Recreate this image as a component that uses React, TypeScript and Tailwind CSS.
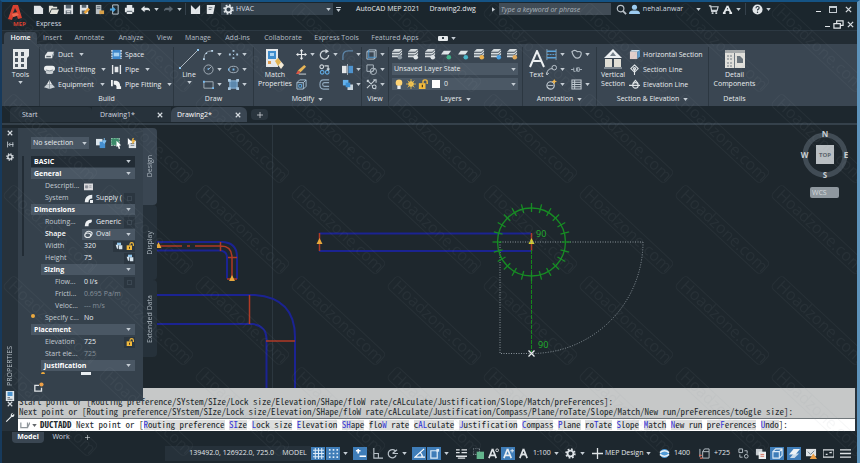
import type { ReactNode } from "react";
import clsx from "clsx";

const glyphs: Record<string, ReactNode> = {
  newFile: <path d="M1 2h7l3 3v6H1z" fill="#dfe3e6" />,
  open: <path d="M1 10V2h4l1 1h4v2H4zM4 6h8l-2 5H2z" fill="#e3e3dc" />,
  save: (
    <g>
      <path d="M1 1h10v10H1z" fill="#dfe3e6" />
      <path d="M3 1h6v4H3zM3 7h6v4H3z" fill="#53606b" />
      <path d="M4 8h4M4 10h4" stroke="#fff" />
    </g>
  ),
  saveAs: (
    <g>
      <path d="M1 1h9v10H1z" fill="#dfe3e6" />
      <path d="M3 1h5v3H3zM3 7h4v4H3z" fill="#53606b" />
      <path d="M5 9l5-5 2 2-5 5z" fill="#e8a33c" />
    </g>
  ),
  openWeb: (
    <g>
      <path d="M2 1h6v10H2z" fill="#b9c0c4" />
      <path d="M3 3h4M3 5h4" stroke="#59656e" />
      <path d="M6 7h5v4H6z" fill="#d9a047" />
    </g>
  ),
  saveWeb: (
    <g>
      <path d="M4 1h6v10H4z" fill="none" stroke="#c7d4dd" />
      <path d="M1 6h5M4 4l2 2-2 2" stroke="#4aa3dd" strokeWidth="2" fill="none" />
    </g>
  ),
  print: (
    <g>
      <path d="M3 1h6v3H3zM1 4h10v5H1zM3 9h6v2H3z" fill="#e2e6e9" />
      <path d="M3 8h6" stroke="#4b5862" />
    </g>
  ),
  undo: <path d="M5 2v2h3q3 0 3 4-2-2-6-1v2L1 5.500z" fill="#e2e6e9" />,
  redo: <path d="M7 2v2H4Q1 4 1 8q2-2 6-1v2l4-3.500z" fill="#58646e" />,
  mail: <path d="M1 1l5 5 5-5v10H1z" fill="#e2e6e9" />,
  sheet: (
    <g>
      <path d="M2 1h9L9 11H2z" fill="#e2e6e9" />
      <path d="M4 4h4M4 6h3" stroke="#68747e" />
    </g>
  ),
  gear: (
    <g fill="none" stroke="#dfe4e8">
      <circle cx="6" cy="6" r="3.200" strokeWidth="2" />
      <circle cx="6" cy="6" r="4.800" strokeWidth="1.800" strokeDasharray="1.900 1.870" />
    </g>
  ),
  search: (
    <g fill="none" stroke="#b9c1c8" strokeWidth="1.300">
      <circle cx="5" cy="5" r="3.600" />
      <path d="M7.500 7.500L11 11" strokeWidth="2" />
    </g>
  ),
  user: (
    <g fill="#9ccbf0">
      <circle cx="6" cy="3.500" r="2.800" />
      <path d="M0 11q0-4 4-4h4q4 0 4 4z" />
    </g>
  ),
  cart: (
    <g>
      <path d="M1 2h2l1 6h6M3 3h8l-1 4H4z" fill="none" stroke="#c9cfd4" strokeWidth="1.300" />
      <path d="M4 9h2v2H4zM8 9h2v2H8z" fill="#c9cfd4" />
    </g>
  ),
  apps: (
    <g fill="none" stroke="#e5e9ec" strokeWidth="1.800">
      <path d="M6 2L2 10M6 2l4 8M3 8q3-3 6 0" />
      <path d="M1 10h3M8 10h3" />
    </g>
  ),
  help: (
    <g>
      <circle cx="6" cy="6" r="5.500" fill="#e2e6e9" />
      <path d="M4.300 4.500q0-1.800 1.800-1.800t1.700 1.600q0 1-1.700 1.900v1" fill="none" stroke="#26313a" strokeWidth="1.200" />
      <circle cx="6" cy="9" r=".8" fill="#26313a" />
    </g>
  ),
  duct: (
    <g>
      <path d="M1 7l3-4h7L9 7zM1 7h8v3H1z" fill="#e4e7e9" />
      <path d="M9 10l2-4V3L9 7z" fill="#9ba6ae" />
      <path d="M2.500 7.500h5V9h-5z" fill="#59646e" />
    </g>
  ),
  fitting: (
    <g>
      <rect x="0" y="2" width="12" height="6" rx="3" fill="#eceeef" />
      <path d="M2 7v3q4 2 8 0V7z" fill="#c8ced2" />
      <path d="M2 6.500q4 2 8 0" fill="none" stroke="#7d8890" />
    </g>
  ),
  equipment: (
    <g>
      <path d="M6 1l3 5H3z" fill="#eceeef" />
      <path d="M3 6h6l3 3-6 2-6-2z" fill="#c9d0d5" />
      <path d="M6 1v10" stroke="#8e99a2" />
    </g>
  ),
  space: (
    <g>
      <path d="M1 1h10v10H1z" fill="#3d87cb" />
      <path d="M1 1v10M11 1v10" stroke="#d9e2e9" strokeWidth="1.500" strokeDasharray="2 1" />
      <path d="M3 4h6v4H3z" fill="#a6d2f2" />
    </g>
  ),
  pipe: <path d="M1 1h1.500v10H1zM9.500 1H11v10H9.500zM4 3h4v6H4z" fill="#e4e7e9" />,
  pipeFitting: (
    <path d="M0 1h2v7H0zM3 2h3q4 1 4 6h1v3H6V8Q6 6 3 6zM7 9h3" fill="#f0f2f3" />
  ),
  arc: (
    <g>
      <path d="M1 11Q1 2 10 2" fill="none" stroke="#9fabb6" />
      <path d="M0 10h2v2H0zM3 4h1.500v1.500H3zM9 1h2v2H9z" fill="#bcd8ee" />
    </g>
  ),
  circle: (
    <g fill="none" stroke="#a8b3bd">
      <circle cx="6" cy="6" r="5" />
      <path d="M6 6l3-3" />
      <path d="M5 5.500h1.500" stroke="#76baf0" strokeWidth="1.500" />
    </g>
  ),
  rect: (
    <g>
      <path d="M1 3h10v7H1z" fill="none" stroke="#a8b3bd" />
      <path d="M0 2h2v2H0zM10 9h2v2h-2z" fill="#76baf0" />
    </g>
  ),
  points: <path d="M5 1h2v2H5zM1 5h2v2H1zM9 5h2v2H9zM5 9h2v2H5zM5.500 5.500h1v1h-1z" fill="#a9c7df" />,
  ellipse: (
    <g>
      <ellipse cx="6" cy="6" rx="5" ry="3.500" fill="none" stroke="#a8b3bd" />
      <path d="M5 5h2v2H5zM0 5h1.500v2H0z" fill="#76baf0" />
    </g>
  ),
  region: (
    <g>
      <path d="M2 2h8v8H2z" fill="#5c88ad" stroke="#8ebbe0" />
      <path d="M0 0h3v3H0zM9 0h3v3H9zM0 9h3v3H0zM9 9h3v3H9z" fill="#a9c7df" />
    </g>
  ),
  move: (
    <g>
      <path d="M6 1v10M1 6h10" stroke="#e7eaec" strokeWidth="1.300" />
      <path d="M6 0l2 2.500H4zM6 12l2-2.500H4zM0 6l2.500-2v4zM12 6L9.500 4v4z" fill="#e7eaec" />
    </g>
  ),
  rotate: (
    <g>
      <path d="M8 2.500a4.500 4.500 0 1 0 2.500 4" fill="none" stroke="#cfd6db" strokeWidth="1.400" />
      <path d="M7 0l4 2.500L7 5z" fill="#cfd6db" />
    </g>
  ),
  fillet: <path d="M1 12V8q0-6 6-6h5" fill="none" stroke="#5e87ab" strokeWidth="1.400" />,
  pencil: (
    <g>
      <path d="M2 7l7-6 2 2-6 6z" fill="#e6b557" />
      <path d="M2 7l3 2-2 2H0z" fill="#d85443" />
      <path d="M3 11h8" stroke="#d8dde0" />
    </g>
  ),
  copy: (
    <g fill="none" strokeWidth="1.200">
      <circle cx="3" cy="3" r="2" stroke="#ccd3d8" />
      <circle cx="3.500" cy="9" r="2" stroke="#5fa8df" />
      <circle cx="9" cy="9" r="2" stroke="#5fa8df" />
      <path d="M6 2h4v4M8.500 5L10 6.500 11.500 5" stroke="#ccd3d8" />
    </g>
  ),
  mirror: (
    <g>
      <path d="M0 2h5v8H0z" fill="#e4e7e9" />
      <path d="M7 2h5v8H7z" fill="#4d93cf" />
      <path d="M6 0v12" stroke="#a8b3bd" />
    </g>
  ),
  box: (
    <g fill="none" stroke="#a9c3d8">
      <path d="M1 4h7v7H1zM1 4l3-3h7v7l-3 3M8 4l3-3" />
      <path d="M3 6h3v3H3z" stroke="#5fa8df" />
    </g>
  ),
  offset: (
    <path d="M11 1H5Q1 1 1 6t4 5h6M11 4H6Q4 4 4 6t2 2h5" fill="none" stroke="#90a9be" strokeWidth="1.200" />
  ),
  order: (
    <g>
      <path d="M1 1h6v6H1z" fill="#64b0ea" />
      <path d="M6 6h6v6H6z" fill="#c8d4dc" />
      <path d="M4 4h5v5H4z" fill="#3c8fd2" />
    </g>
  ),
  cube: (
    <g fill="none" stroke="#b7c6d2">
      <path d="M3 1h8v8l-2 2H1V3zM1 3h8v8M9 3l2-2" />
      <path d="M3 1v8h8M3 9l-2 2" stroke="#509bd5" />
    </g>
  ),
  shapes: (
    <g fill="none" stroke="#b2bdc6">
      <path d="M1 1h7v7H1z" />
      <circle cx="8" cy="8" r="3.500" />
      <path d="M5 10l5-5" />
    </g>
  ),
  select: (
    <g fill="none" stroke="#c3ccd3" strokeWidth="1.200">
      <path d="M1 1l10 10M10 1L1 10M1 3l2-2M8 1h3v3" />
      <circle cx="9" cy="8.500" r="2" fill="#35424f" />
    </g>
  ),
  bulb: (
    <g>
      <circle cx="6" cy="4.500" r="4" fill="#ffd474" />
      <path d="M4 8h4v4H4z" fill="#e9edef" />
    </g>
  ),
  sun: (
    <g>
      <circle cx="6" cy="6" r="3.300" fill="#f8cc5b" />
      <path d="M6 0v12M0 6h12M2 2l8 8M10 2l-8 8" stroke="#e8b94a" />
    </g>
  ),
  lock: (
    <g>
      <path d="M1 5h8v7H1z" fill="#f3ba3d" />
      <path d="M6 5V3q0-2 2.500-2T11 3v3" fill="none" stroke="#f3ba3d" strokeWidth="1.700" />
      <path d="M4.500 7h1.500v3H4.500z" fill="#4a3c1e" />
    </g>
  ),
  dim: (
    <g fill="none" stroke="#5aa4dc">
      <path d="M1 0v12M11 0v12" stroke="#8aa3b7" />
      <path d="M1 2.500h10M1 9.500h10" strokeWidth="1.500" />
      <path d="M1 6h10" strokeDasharray="2 1" />
    </g>
  ),
  leader: (
    <g fill="none" stroke="#c3ccd3">
      <path d="M1 11q0-6 6-6" />
      <circle cx="9" cy="4" r="2.500" />
      <path d="M0 9l1 3 2-2" />
    </g>
  ),
  note: (
    <g>
      <circle cx="5" cy="7" r="4" fill="none" stroke="#c3ccd3" strokeWidth="1.300" />
      <path d="M2 7h6" stroke="#c3ccd3" />
      <path d="M9 0l1 2 2 .5-2 1L9 6 8 3.500 6 3l2-1z" fill="#f5b94a" />
    </g>
  ),
  cloud: <path d="M1 3q3-3 6 0 5-1 4 3-1 4-4 4Q3 10 1 3z" fill="none" stroke="#b7c1c9" strokeWidth="1.200" />,
  tag: <path d="M0 6h3M9 6h3M3 4v4h2M6 4v4M8 4H7v4h2V4z" fill="none" stroke="#a9b4bd" />,
  table: (
    <path d="M1 1h10v10H1zM1 3.500h10M1 6h10M1 8.500h10M4 1v10" fill="none" stroke="#c3ccd3" strokeWidth="1.100" />
  ),
  hsection: (
    <g>
      <path d="M1 3l2-2h9l-2 2z" fill="#cfe0ec" />
      <path d="M1 3h8v8H1z" fill="#e3cfcb" />
      <path d="M9 3l3-2v7l-3 3z" fill="#5e9bcb" />
    </g>
  ),
  sectionLine: (
    <g fill="none" stroke="#dfe4e7" strokeWidth="1.200">
      <path d="M6 1l4 4-4 4-4-4zM6 5v7" />
      <circle cx="6" cy="5" r="1.200" />
    </g>
  ),
  elevLine: (
    <g fill="none" stroke="#dfe4e7" strokeWidth="1.200">
      <circle cx="7" cy="7" r="3" />
      <path d="M0 7h12M4 5l3-3.500L10 5" />
    </g>
  ),
  swap: (
    <g>
      <path d="M0 1h7v7H0z" fill="#dbe4ea" />
      <path d="M4 4h6v7H4z" fill="#458fd0" />
      <path d="M9 0v5M7 3l2 3 2-3z" stroke="#7fbef0" fill="#7fbef0" />
    </g>
  ),
  pickGreen: (
    <g>
      <path d="M0 0h9v8H0z" fill="#3c8b6a" stroke="#bcd6c9" strokeDasharray="2 1" />
      <path d="M6 3l5 5-2 .4 1 3-1.500.5-1-3-1.500 1z" fill="#fff" />
    </g>
  ),
  quick: (
    <g>
      <path d="M3 3h8v8H3z" fill="#dfe3e6" />
      <path d="M5 6h4M5 8h4" stroke="#6b7781" />
      <path d="M2 0l5 5-3 .3L2 8z" fill="#fff" />
      <path d="M8 0l-1 3h2L7 6" fill="none" stroke="#eab03e" strokeWidth="1.500" />
    </g>
  ),
  desc: (
    <g>
      <path d="M0 2h12v9H0z" fill="#d9d9dc" />
      <path d="M2 5h3v3H2zM7 5h3M7 7h3" fill="#8b8f98" stroke="#8b8f98" />
    </g>
  ),
  elbow: <path d="M1 11Q1 1 11 1v5Q6 6 6 11zM8 8h4v4H8z" fill="#eceff1" />,
  generic: <path d="M1 11Q1 2 10 2q2 4-3 5-1 0-1 4z" fill="#eceff1" />,
  oval: (
    <g fill="none" stroke="#e5e9eb" strokeWidth="1.500">
      <ellipse cx="5" cy="7" rx="4" ry="3" />
      <path d="M2 4q3-4 8-1 2 2-1 5" />
    </g>
  ),
  page: (
    <g>
      <path d="M3 1h6v4H3z" fill="#8ec3ea" />
      <path d="M6 5h5v6H6zM1 4h4v6H3z" fill="#d6e3ec" />
    </g>
  ),
  manager: (
    <g>
      <path d="M1 0h10v12H1z" fill="#dfe6eb" />
      <path d="M3 1h6v5H3z" fill="#4a93cf" />
      <path d="M3 8h3M3 10h6" stroke="#53606b" />
    </g>
  ),
  addSet: (
    <g>
      <path d="M6 4H1v7h8V7" fill="none" stroke="#dfe3e6" strokeWidth="1.600" />
      <circle cx="9" cy="3" r="2.500" fill="#eda047" />
    </g>
  ),
  grid: <path d="M0 2.500h12M0 6h12M0 9.500h12M2.500 0v12M6 0v12M9.500 0v12" stroke="#dcebf8" strokeWidth="1.100" />,
  dots: (
    <path d="M1 2h10M1 6h10M1 10h10" stroke="#dcebf8" strokeWidth="1.800" strokeDasharray="1.800 2.300" />
  ),
  infer: <path d="M1 3h5M3.500 1v5M5 9h7" stroke="#fff" strokeWidth="1.800" fill="none" />,
  ortho: <path d="M2 0v11h10M2 6h5v5" stroke="#bac3ca" strokeWidth="1.200" fill="none" />,
  polar: (
    <g fill="none" stroke="#bac3ca" strokeWidth="1.300">
      <path d="M10 8a4.500 4.500 0 1 1-1-5M6 6l5-4M6 6h6" />
    </g>
  ),
  track: <path d="M11 1L1 10h11M7 5q2 2 2 5" stroke="#fff" strokeWidth="1.300" fill="none" />,
  osnap: (
    <g>
      <path d="M2 3h7v8H2z" fill="none" stroke="#dcebf8" strokeWidth="1.300" />
      <path d="M8 1h3v3H8z" fill="#dcebf8" />
    </g>
  ),
  weights: <path d="M0 2h4M6 2h6M0 5h4M6 5h6M0 9h12M2 11h8" stroke="#dfe3e6" strokeWidth="1.400" />,
  cycle: (
    <g>
      <path d="M0 0h7v7H0z" fill="none" stroke="#aab4bc" strokeDasharray="1 1" />
      <path d="M4 4h8v8H4z" fill="#62b48c" />
    </g>
  ),
  annoVis: (
    <g fill="none" stroke="#dfe3e6">
      <path d="M5 1L1 11M5 1l4 10M2 8h6" strokeWidth="1.800" />
      <circle cx="10" cy="2.500" r="1.500" />
    </g>
  ),
  anno: <path d="M6 1L2 11M6 1l4 10M3 8q3-2 6 0" stroke="#dfe3e6" strokeWidth="1.800" fill="none" />,
  annoSpark: (
    <g>
      <path d="M5 1L1 11M5 1l4 10M2 8h6" stroke="#e8eef2" strokeWidth="1.800" fill="none" />
      <path d="M10 1v4M8 3h4" stroke="#e8eef2" />
    </g>
  ),
  plus: <path d="M6 0v12M0 6h12" stroke="#dfe3e6" strokeWidth="1.400" />,
  sphere: (
    <g>
      <circle cx="6" cy="6" r="5" fill="#4f9ad8" />
      <path d="M1 5q5-4 10 0M1 7q5 4 10 0" stroke="#eef3f6" strokeWidth="1.700" fill="none" />
    </g>
  ),
  elevCube: (
    <g fill="none" stroke="#bdc6cd">
      <path d="M4 4h7v7H4zM4 4l2-3h5v3M1 1v9" />
      <path d="M0 8h3M1 11h3" stroke="#d56a57" strokeWidth="1.500" />
    </g>
  ),
  link: (
    <g fill="none" stroke="#bdc6cd">
      <path d="M1 1h4v4H1zM7 3h3v3" />
      <circle cx="9" cy="9" r="2" />
      <path d="M2 7v3h3" />
    </g>
  ),
  pages: (
    <g>
      <path d="M1 1h7v7H1z" fill="#c8ced2" />
      <path d="M4 4h8v8H4z" fill="#eceff0" />
      <path d="M6 7h4M6 9h4" stroke="#d56a57" />
    </g>
  ),
  isoBox: (
    <g fill="none" stroke="#dcebf8" strokeWidth="1.200">
      <path d="M1 4h7v7H1zM1 4l3-3h7v7l-3 3M8 4l3-3" />
    </g>
  ),
  gfx: (
    <g fill="#eef3f6">
      <path d="M5 1h7L7 7H0z" />
      <path d="M5 6h6l-5 5H1z" opacity=".8" />
    </g>
  ),
  warn: (
    <g>
      <path d="M0 1h11v8H0z" fill="#dfe3e6" />
      <path d="M2 4l3 3 4-4" stroke="#6b7781" fill="none" />
      <path d="M8 6l4 6H4z" fill="#eda047" />
    </g>
  ),
  clean: (
    <g fill="none" stroke="#dfe3e6" strokeWidth="1.200">
      <path d="M0 2h12v8H0zM3 7h2M7 5h2V4" />
    </g>
  ),
  burger: <path d="M0 2h12M0 6h12M0 10h12" stroke="#dfe3e6" strokeWidth="1.500" />,
  pin: <path d="M1 1v10M4 6h7M10 2v8M6 3L3 6l3 3" stroke="#cdd5db" strokeWidth="1.400" fill="none" />,
  wrench: <path d="M1 11l6-6q-1-3 3-4L8 3l1 1 2-2q1 4-3 4l-6 6z" fill="#e9edef" />,
  restore: <path d="M1 5h7v5H1zM4 5V2h7v5H8" stroke="#e2e6e9" strokeWidth="1.300" fill="none" />,
  prompt: <path d="M1 3v6h8V3M9 9l3-6" stroke="#8f969b" strokeWidth="1.500" fill="none" />,
};

const layerMarks = ["#8a96a0", "#e1e6e9", "#e1e6e9", "#3fb489", "#48b6c9", "#edb04c", "#4a9ddd", "#e0a95c"];

const Icon = ({ name, className = "size-[11px]" }: { name: string; className?: string }) => (
  <svg viewBox="0 0 12 12" className={clsx("shrink-0", className)} aria-hidden="true">
    {glyphs[name]}
  </svg>
);

const Caret = ({ className = "" }: { className?: string }) => (
  <svg viewBox="0 0 6 4" className={clsx("h-[3px] w-[5px] shrink-0", className)} aria-hidden="true">
    <path d="M0 0h6L3 4z" fill="#c5cdd4" />
  </svg>
);

const Close = ({ className = "size-[7px]" }: { className?: string }) => (
  <svg viewBox="0 0 8 8" className={clsx("shrink-0", className)} aria-hidden="true">
    <path d="M1 1l6 6M7 1L1 7" stroke="#d5dbe0" strokeWidth="1.500" />
  </svg>
);

const IconButton = ({ name, label, className = "w-[15px]" }: { name: string; label: string; className?: string }) => (
  <button aria-label={label} className={clsx("flex shrink-0 items-center justify-center", className)}>
    <Icon name={name} />
  </button>
);

const TitleBar = () => (
  <header className="flex h-[29px] border-b border-[#2c3842] bg-[#1b262d]">
    <svg viewBox="0 0 20 24" className="ml-[5px] mt-[1px] h-6 w-5 shrink-0" aria-hidden="true">
      <path d="M1 16L6 2h5l4 13-4 1-1-3-4 1-1 3z" fill="#d9402f" />
      <path d="M6 10l2-5 2 4z" fill="#1b262d" />
      <path d="M5 11l5-1 2 2-6 2z" fill="#ef6a50" />
      <text x="6" y="23" className="fill-[#d9402f] text-[6px] font-bold">
        MEP
      </text>
    </svg>
    <div className="flex min-w-0 flex-1 flex-col">
      <div className="flex h-[15px] items-center">
        <div className="ml-1 flex items-center">
          <IconButton name="newFile" label="New" />
          <IconButton name="open" label="Open" />
          <IconButton name="save" label="Save" />
          <IconButton name="saveAs" label="Save as" className="w-4" />
          <IconButton name="openWeb" label="Open from web" />
          <IconButton name="saveWeb" label="Save to web" />
          <IconButton name="print" label="Plot" />
          <IconButton name="undo" label="Undo" className="w-4" />
          <Caret className="mx-px" />
          <IconButton name="redo" label="Redo" className="w-4" />
          <Caret className="mx-px" />
          <span className="mx-[2px] h-3 w-px bg-[#35414b]" />
          <IconButton name="mail" label="Share" />
          <IconButton name="sheet" label="Sheet set" />
        </div>
        <button className="ml-[3px] flex h-[12px] w-28 items-center gap-[2px] bg-[#36434e] px-[2px]">
          <Icon name="gear" />
          HVAC
          <Caret className="ml-auto" />
        </button>
        <button aria-label="Customize" className="ml-[3px] border-t border-[#c5cdd4] pt-px">
          <Caret />
        </button>
        <h1 className="ml-[15px] flex shrink-0 gap-[10px] whitespace-nowrap text-[#e6eaed]">
          <span>AutoCAD MEP 2021</span>
          <span>Drawing2.dwg</span>
        </h1>
        <Caret className="ml-[15px] -rotate-90" />
        <input
          aria-label="Search help"
          placeholder="Type a keyword or phrase"
          className="ml-[3px] h-[12px] w-28 min-w-0 bg-[#414c56] px-[2px] italic placeholder:text-[#a9b2ba]"
        />
        <div className="ml-[3px] flex items-center">
          <IconButton name="search" label="Search" />
          <button className="flex items-center gap-[3px]">
            <Icon name="user" />
            nehal.anwar
            <Caret className="ml-[10px]" />
          </button>
          <IconButton name="cart" label="Store" className="ml-[5px] w-[14px]" />
          <IconButton name="apps" label="App store" />
          <Caret className="ml-px" />
          <span className="mx-[4px] h-3 w-px bg-[#35414b]" />
          <IconButton name="help" label="Help" />
          <Caret className="ml-px" />
        </div>
        <div className="ml-auto mr-[5px] flex items-center gap-2">
          <button aria-label="Minimize" className="mt-[5px] h-px w-[5px] bg-[#e2e6e9]" />
          <button aria-label="Maximize" className="h-[7px] w-2 border border-t-2 border-[#c6cdd3]" />
          <button aria-label="Close">
            <Close />
          </button>
        </div>
      </div>
      <div className="flex h-[14px] items-center pt-[2px]">
        <button className="ml-[9px]">Express</button>
        <div className="ml-auto mr-[3px] flex items-center gap-1">
          <button aria-label="Minimize drawing" className="mt-[5px] h-px w-[5px] bg-[#e2e6e9]" />
          <IconButton name="restore" label="Restore drawing" className="w-[9px]" />
          <button aria-label="Close drawing">
            <Close />
          </button>
        </div>
      </div>
    </div>
  </header>
);

const ribbonTabs = [
  { title: "Home", width: "w-[33px]" },
  { title: "Insert", width: "w-[31px]" },
  { title: "Annotate", width: "w-[43px]" },
  { title: "Analyze", width: "w-[40px]" },
  { title: "View", width: "w-[27px]" },
  { title: "Manage", width: "w-[40px]" },
  { title: "Add-ins", width: "w-[39px]" },
  { title: "Collaborate", width: "w-[52px]" },
  { title: "Express Tools", width: "w-[55px]" },
  { title: "Featured Apps", width: "w-[62px]" },
];

const RibbonTabs = () => (
  <nav className="flex h-[13px] items-end bg-[#222c34] pl-[2px]">
    {ribbonTabs.map((tab, i) => (
      <button
        key={tab.title}
        className={clsx(
          "h-[12px] shrink-0 whitespace-nowrap rounded-t-sm text-center",
          tab.width,
          i === 0 ? "bg-[#3a4652] font-semibold text-white" : "text-[#b4bdc5]"
        )}
      >
        {tab.title}
      </button>
    ))}
    <button aria-label="Ribbon display" className="ml-3 flex h-[12px] items-center gap-[3px]">
      <span className="flex h-[5px] w-[10px] items-center justify-center rounded-[1px] bg-[#e6eaed]">
        <span className="size-[2px] bg-[#333e48]" />
      </span>
      <Caret />
    </button>
  </nav>
);

const Panel = ({
  title,
  className,
  menu,
  children,
}: {
  title: string;
  className: string;
  menu?: boolean;
  children: ReactNode;
}) => (
  <section className={clsx("flex shrink-0 flex-col border-r border-[#2c3741]", className)}>
    <div className="flex h-[45px]">{children}</div>
    <h2 className="flex h-[14px] items-center justify-center gap-1 whitespace-nowrap">
      {title}
      {menu && <Caret />}
    </h2>
  </section>
);

const Command = ({ icon, label, menu }: { icon: string; label: string; menu?: boolean }) => (
  <button className="flex h-[15px] items-center gap-[3px] whitespace-nowrap">
    <Icon name={icon} />
    {label}
    {menu && <Caret className="ml-[3px]" />}
  </button>
);

const IconMenus = ({ names, last }: { names: string[]; last?: boolean }) => (
  <div className="flex flex-col">
    {names.map((name, i) => (
      <button key={name} aria-label={name} className="flex h-[15px] w-[25px] items-center gap-[3px]">
        <Icon name={name} />
        {!(last && i === 1) && <Caret />}
      </button>
    ))}
  </div>
);

const BigButton = ({ lines, menu, className, children }: { lines: string[]; menu?: boolean; className: string; children: ReactNode }) => (
  <button className={clsx("flex flex-col items-center whitespace-nowrap leading-[9px]", className)}>
    <span className="flex h-[23px] items-center">{children}</span>
    {lines.map((line) => (
      <span key={line}>{line}</span>
    ))}
    {menu && <Caret className="mt-[2px]" />}
  </button>
);

const Ribbon = () => (
  <div className="flex h-[62px] bg-[#3a4652] pt-[3px] text-[#e8ecef]">
    <section className="w-[38px] shrink-0 border-r border-[#2c3741]">
      <BigButton lines={["Tools"]} menu className="w-full">
        <svg viewBox="0 0 16 20" className="h-5 w-4" aria-hidden="true">
          <path d="M0 0h13l3-1v8l-2 2v11H0z" fill="#e6e9eb" />
          <path d="M2 3h3v4H2zM8 3h3v4H8zM2 9h3v4H2zM8 9h3v4H8zM2 15h3v3H2zM8 15h3v3H8z" fill="#4b5661" />
        </svg>
      </BigButton>
    </section>
    <Panel title="Build" className="w-[134px]">
      <div className="ml-1 flex w-[67px] flex-col">
        <Command icon="duct" label="Duct" menu />
        <Command icon="fitting" label="Duct Fitting" menu />
        <Command icon="equipment" label="Equipment" menu />
      </div>
      <div className="flex flex-col">
        <Command icon="space" label="Space" />
        <Command icon="pipe" label="Pipe" menu />
        <Command icon="pipeFitting" label="Pipe Fitting" menu />
      </div>
    </Panel>
    <Panel title="Draw" className="w-20">
      <BigButton lines={["Line"]} menu className="ml-px w-8">
        <svg viewBox="0 0 20 20" className="size-5" aria-hidden="true">
          <path d="M1 19L19 1" stroke="#aeb8c1" />
          <path d="M0 18h2v2H0zM18 0h2v2h-2z" fill="#8fc6f0" />
        </svg>
      </BigButton>
      <IconMenus names={["arc", "circle", "rect"]} />
      <IconMenus names={["points", "ellipse", "region"]} />
    </Panel>
    <Panel title="Modify" menu className="w-[108px]">
      <BigButton lines={["Match", "Properties"]} className="w-[42px]">
        <svg viewBox="0 0 20 20" className="size-5" aria-hidden="true">
          <path d="M1 0h12v18H1z" fill="#e6e9eb" />
          <path d="M3 2h8v8H3z" fill="#3f8dcc" />
          <path d="M5 4h4v3H5z" fill="#acd5f4" />
          <path d="M3 12h3v3H3z" fill="#e19b4d" />
          <path d="M10 12l3-3 6 7-3 4z" fill="#f3ead6" />
          <path d="M10 12l3 5 3-4-3-4z" fill="#e2b452" />
        </svg>
      </BigButton>
      <div className="grid grid-cols-[23px_23px_19px]">
        {["move", "rotate", "fillet", "pencil", "copy", "mirror", "box", "offset", "order"].map((name, i) => (
          <button key={name} aria-label={name} className="flex h-[15px] items-center gap-[3px]">
            <Icon name={name} />
            {(i < 3 || i % 3 === 2) && <Caret />}
          </button>
        ))}
      </div>
    </Panel>
    <Panel title="View" className="w-[27px]">
      <div className="ml-1">
        <IconMenus names={["cube", "shapes", "select"]} />
      </div>
    </Panel>
    <Panel title="Layers" menu className="w-[134px]">
      <div className="ml-[3px] w-[126px]">
        <div className="flex h-[15px] items-center justify-between">
          {layerMarks.map((mark, i) => (
            <button key={i} aria-label={`Layer tool ${i + 1}`}>
              <svg viewBox="0 0 12 12" className="size-[11px]">
                {i === 3 || i === 4 ? (
                  <path d="M3 2h8L8 6H0z" fill="#dfe4e7" />
                ) : (
                  <path d="M3 0h8L8 3H0zM0 4h8l3-3v2L8 6H0zM0 7h8l3-3v2L8 9H0z" fill="#d6dcdf" />
                )}
                <circle cx="8.500" cy="9" r="2.500" fill={mark} />
              </svg>
            </button>
          ))}
        </div>
        <button className="my-[1px] flex h-[12px] w-full items-center justify-between bg-[#4b5865] px-[2px]">
          Unsaved Layer State
          <Caret />
        </button>
        <button className="mt-[3px] flex h-[12px] w-full items-center gap-[2px] bg-[#4b5865] px-[2px]">
          <Icon name="bulb" className="size-[10px]" />
          <Icon name="sun" className="size-[10px]" />
          <Icon name="lock" className="size-[10px]" />
          <span className="mx-[2px] size-2 bg-white" />
          0
          <Caret className="ml-auto" />
        </button>
      </div>
    </Panel>
    <Panel title="Annotation" menu className="w-[74px]">
      <BigButton lines={["Text"]} className="w-[27px] pl-1">
        <svg viewBox="0 0 16 18" className="h-[18px] w-4" aria-hidden="true">
          <path d="M1 17L8 1l7 16M4 11h8" stroke="#eceff1" strokeWidth="2" fill="none" />
        </svg>
      </BigButton>
      <IconMenus names={["dim", "leader", "note"]} />
      <IconMenus names={["cloud", "tag", "table"]} last />
    </Panel>
    <Panel title="Section & Elevation" menu className="w-[112px]">
      <BigButton lines={["Vertical", "Section"]} className="w-8">
        <svg viewBox="0 0 18 20" className="h-5 w-[18px]" aria-hidden="true">
          <path d="M9 0l9 9H0z" fill="#eceff1" />
          <path d="M6 7l3-4 3 4z" fill="#75818b" />
          <path d="M1 10h7v8H1zM10 10h7v8h-7z" fill="#e0ded5" />
          <path d="M0 19h18" stroke="#c0c8ce" />
        </svg>
      </BigButton>
      <div className="flex flex-col">
        <Command icon="hsection" label="Horizontal Section" />
        <Command icon="sectionLine" label="Section Line" />
        <Command icon="elevLine" label="Elevation Line" />
      </div>
    </Panel>
    <section className="flex w-[51px] shrink-0 flex-col">
      <div className="h-[45px]">
        <BigButton lines={["Detail", "Components"]} className="w-full">
          <svg viewBox="0 0 20 20" className="size-5" aria-hidden="true">
            <path d="M0 1h20v18H0z" fill="#e2e1dc" />
            <path d="M0 1h20v3H0z" fill="#a5a9aa" />
            <path d="M2 7h6M2 10h6M2 14h6M2 17h6" stroke="#707a82" strokeDasharray="2 1" />
            <path d="M9.500 4v15" stroke="#707a82" />
            <path d="M12 7h3l3 3v4h-6z" fill="#69737b" />
          </svg>
        </BigButton>
      </div>
      <h2 className="flex h-[14px] items-center justify-center">Details</h2>
    </section>
  </div>
);

const FileTabs = () => (
  <div className="flex h-[19px] items-center border-b-2 border-[#35414b] bg-[#1d272e] pl-2">
    <button className="h-[15px] w-[82px] rounded-t bg-[#27323b] pl-3 text-left">Start</button>
    <div className="flex h-[15px] w-[79px] items-center justify-between bg-[#27323b] px-2">
      <button>Drawing1*</button>
      <button aria-label="Close Drawing1">
        <Close className="size-[6px]" />
      </button>
    </div>
    <div className="flex h-[15px] w-[76px] items-center justify-between rounded-t-md bg-[#3a4652] px-[6px] text-white">
      <button>Drawing2*</button>
      <button aria-label="Close Drawing2">
        <Close className="size-[6px]" />
      </button>
    </div>
    <button aria-label="New tab" className="ml-1 flex h-[11px] w-[17px] items-center justify-center rounded bg-[#2a353e]">
      <Icon name="plus" className="size-[6px]" />
    </button>
  </div>
);

type Row = {
  label: string;
  kind?: "dark" | "group" | "sub";
  indent?: boolean;
  value?: string;
  icon?: string;
  muted?: boolean;
  ends?: string[];
  dot?: boolean;
  drop?: boolean;
};

const rows: Row[] = [
  { label: "BASIC", kind: "dark" },
  { label: "General", kind: "group" },
  { label: "Descripti...", icon: "desc", value: "" },
  { label: "System", icon: "elbow", value: "Supply (", ends: ["blank"] },
  { label: "Dimensions", kind: "group" },
  { label: "Routing...", icon: "generic", value: "Generic", ends: ["blank"] },
  { label: "Shape", icon: "oval", value: "Oval", drop: true },
  { label: "Width", value: "320", ends: ["page", "lock"] },
  { label: "Height", value: "75", ends: ["page"] },
  { label: "Sizing", kind: "sub" },
  { label: "Flow...", indent: true, value: "0 l/s", ends: ["blank"] },
  { label: "Fricti...", indent: true, value: "0.695 Pa/m", muted: true },
  { label: "Veloc...", indent: true, value: "--- m/s", muted: true },
  { label: "Specify c...", value: "No", dot: true },
  { label: "Placement", kind: "group" },
  { label: "Elevation", value: "725", ends: ["lock"] },
  { label: "Start ele...", value: "725", muted: true },
  { label: "Justification", kind: "sub" },
];

const PropertyRow = ({ row }: { row: Row }) => {
  if (row.kind) {
    return (
      <button
        className={clsx(
          "mb-px flex h-[11px] shrink-0 items-center justify-between px-[3px] pr-1 font-bold text-white",
          row.kind === "dark" ? "bg-[#222c35]" : "bg-[#4a5764]",
          row.kind === "sub" && "ml-[10px]"
        )}
      >
        {row.label}
        <Caret />
      </button>
    );
  }
  return (
    <div className="relative flex h-[12px] shrink-0 items-center">
      {row.dot && <span className="absolute left-0 top-[2px] size-[4px] rounded-full bg-[#efaa3d]" />}
      <span
        className={clsx(
          "shrink-0 whitespace-nowrap",
          row.indent ? "ml-6 w-[27px]" : "ml-[14px] w-[37px]",
          row.label === "Shape" ? "font-semibold text-white" : "text-[#c3cbd2]"
        )}
      >
        {row.label}
      </span>
      <span
        className={clsx(
          "flex h-[11px] min-w-0 flex-1 items-center gap-[3px] whitespace-nowrap pl-[2px]",
          row.muted ? "text-[#86919b]" : "text-[#e9edf0]",
          row.drop && "bg-[#4a5764] pr-1"
        )}
      >
        {row.icon && <Icon name={row.icon} className="size-[9px]" />}
        {row.value}
        {row.drop && <Caret className="ml-auto" />}
      </span>
      {row.ends?.map((end) => (
        <button key={end} aria-label={`${row.label} ${end}`} className="flex h-[11px] w-[11px] shrink-0 items-center justify-center bg-[#2b3640]">
          {end === "lock" ? (
            <Icon name="lock" className="size-2" />
          ) : end === "page" ? (
            <Icon name="page" className="size-2" />
          ) : (
            <span className="size-[5px] border border-[#3b4752]" />
          )}
        </button>
      ))}
    </div>
  );
};

const sideTabs = [
  { title: "Design", style: "h-[77px] bg-[#3a4652]" },
  { title: "Display", style: "h-[75px] bg-[#26313a]" },
  { title: "Extended Data", style: "h-[77px] bg-[#26313a]" },
];

const Properties = () => (
  <aside className="absolute left-0 top-[3px] z-10 flex items-start">
    <div className="flex h-[273px] w-4 flex-col items-center gap-[5px] bg-[#27323b] pt-[2px]">
      <button aria-label="Close palette">
        <Close className="size-[6px]" />
      </button>
      <Icon name="pin" className="size-[7px]" />
      <Icon name="gear" className="size-2" />
      <span className="mt-auto rotate-180 whitespace-nowrap text-[#b7c0c8] [writing-mode:vertical-rl]">PROPERTIES</span>
      <Icon name="manager" className="size-[10px]" />
    </div>
    <div className="flex h-[273px] w-[125px] flex-col bg-[#35414c]">
      <div className="flex h-[28px] shrink-0 items-center gap-1 pl-[13px] pt-[2px]">
        <select aria-label="Selection" className="h-[12px] w-[58px] appearance-none bg-[#4a5764] px-[2px] text-[#e9edf0]">
          <option>No selection</option>
        </select>
        <Caret className="-ml-[11px] mr-[5px]" />
        <Icon name="swap" />
        <Icon name="pickGreen" />
        <Icon name="quick" />
      </div>
      <div className="flex h-[221px] shrink-0">
        <span className="ml-1 h-[100px] w-[2px] bg-[#222c35]" />
        <div className="ml-[7px] flex w-[104px] flex-col">
          {rows.map((row) => (
            <PropertyRow key={row.label} row={row} />
          ))}
          {/* top sliver of the row that is scrolled out of view */}
          <div className="flex h-[3px] items-start gap-[36px] pl-[10px]">
            <span className="h-[2px] w-1 rounded-t-full bg-[#efaa3d]" />
            <span className="h-[3px] w-[10px] bg-[#e9edf0]" />
          </div>
        </div>
      </div>
      <button aria-label="Add property set" className="ml-4 mt-[5px] w-3">
        <Icon name="addSet" className="size-[10px]" />
      </button>
    </div>
    <div className="flex w-[14px] flex-col text-[#aeb8c0]">
      {sideTabs.map((tab) => (
        <button key={tab.title} className={clsx("flex items-center justify-center rounded-r-sm", tab.style)}>
          <span className="rotate-180 whitespace-nowrap text-[7px] leading-[10px] [writing-mode:vertical-rl]">{tab.title}</span>
        </button>
      ))}
    </div>
  </aside>
);

const ticks = Array.from({ length: 24 }, (_, i) => i * 15);

const Drawing = () => (
  <svg viewBox="2 125 855 263" preserveAspectRatio="xMinYMin slice" className="block h-full w-full" aria-label="Drawing2">
    <path d="M272.500 125v263" stroke="#2c373f" />
    <g fill="none" stroke="#1b2392" strokeWidth="2">
      <path d="M157 242h66q14 1 14 15v22M157 250.500h62q8 0 8 7v21" />
      <path d="M157 295h98q40 3 40 42v51M157 324h96q13 2 13.500 14v50" />
      <path d="M319 233.500h212M319 251h212" />
    </g>
    <g fill="none" stroke="#b03a26" strokeWidth="1.500">
      <path d="M158 246h24M187 246h3M195 246h26q11 0 11 12v21M220.500 242v9M228 257.500h9M227 279h10" />
      <path d="M249.500 295v29M266 341h29M319.500 233v18M531.500 233v18" />
    </g>
    <g fill="#e7a83c">
      <path d="M158.500 242l3 6h-6zM232 275l3 6h-6zM319.500 238l3 6h-6z" />
      <path d="M531.500 238l3 6h-6z" fill="#d6cf30" />
    </g>
    <g fill="none" stroke="#8b959c" strokeDasharray="1 1.500">
      <path d="M500 242h143M500 242v111.500h31M643 242a111.500 111.500 0 0 1-111.500 111.500" />
    </g>
    <path d="M531.500 250v102" stroke="#14861c" strokeDasharray="4 1" />
    <g fill="none" stroke="#178c24" strokeWidth="1.300">
      <circle cx="531.500" cy="242" r="34" />
      {ticks.map((angle) => (
        <path key={angle} d="M531.500 203v9" transform={`rotate(${angle} 531.500 242)`} />
      ))}
    </g>
    <g className="fill-[#1fb32b] text-[9px]">
      <text x="536" y="237">90</text>
      <text x="538" y="348">90</text>
    </g>
    <path d="M528.500 350.500l6 6M534.500 350.500l-6 6" stroke="#e9edef" strokeWidth="1.300" />
    <circle cx="825" cy="155" r="20" fill="none" stroke="#414c55" strokeWidth="5" />
    <path d="M816 145h18v19h-18z" fill="#b9bfc3" />
    <g textAnchor="middle" className="fill-[#c9cfd3] text-[8px] font-bold">
      <text x="825" y="137">N</text>
      <text x="804.500" y="158">W</text>
      <text x="846" y="158">E</text>
      <text x="825" y="178">S</text>
      <text x="825" y="157" className="fill-[#59636b] text-[6px]">TOP</text>
    </g>
    <rect x="810" y="187" width="29" height="11" rx="2" fill="#8f989f" />
    <text x="812" y="195" className="fill-[#d5dadd] text-[7px]">WCS</text>
  </svg>
);

// [prefix, shortcut, suffix]
const options = [
  ["", "R", "outing preference"],
  ["", "SI", "ze"],
  ["", "L", "ock size"],
  ["", "E", "levation"],
  ["", "SH", "ape"],
  ["flo", "W", " rate"],
  ["c", "AL", "culate"],
  ["", "J", "ustification"],
  ["", "C", "ompass"],
  ["", "P", "lane"],
  ["ro", "T", "ate"],
  ["", "S", "lope"],
  ["", "M", "atch"],
  ["", "N", "ew run"],
  ["pre", "F", "erences"],
  ["", "U", "ndo"],
];

const CommandLine = () => (
  <div className="flex h-[43px] bg-[#27323b]">
    <div className="flex w-4 flex-col items-center justify-end gap-[5px] pb-[9px]">
      <Close className="size-[6px]" />
      <Icon name="wrench" className="size-[10px]" />
    </div>
    <div className="mr-[2px] flex min-w-0 flex-1 flex-col justify-end overflow-hidden whitespace-pre bg-[#c6c8c8] font-['Noto_Sans_Mono_CJK_SC','DejaVu_Sans_Mono',monospace] text-[9px] leading-[10px] text-[#23282b]">
      <p className="pl-px">Start point or [Routing preference/SYstem/SIze/Lock size/Elevation/SHape/floW rate/cALculate/Justification/Slope/Match/preFerences]:</p>
      <p className="pl-px">Next point or [Routing preference/SYstem/SIze/Lock size/Elevation/SHape/floW rate/cALculate/Justification/Compass/Plane/roTate/Slope/Match/New run/preFerences/toGgle size]:</p>
      <div className="mt-px flex h-[13px] items-center border-t border-[#70777b] bg-white">
        <Icon name="prompt" className="ml-[2px] size-[10px]" />
        <Caret className="ml-[2px] mr-[3px] brightness-50" />
        <b>DUCTADD</b> Next point or [
        {options.map(([before, key, after], i) => (
          <span key={after}>
            <button className="bg-[#dddede]">
              {before}
              <span className="text-[#3535d8]">{key}</span>
              {after}
            </button>
            {i < options.length - 1 && " "}
          </span>
        ))}
        ]:
      </div>
    </div>
  </div>
);

const StatusButton = ({ name, active, menu, wide }: { name: string; active?: boolean; menu?: boolean; wide?: boolean }) => (
  <button aria-label={name} className={clsx("flex shrink-0 items-center", menu ? "w-[27px]" : wide ? "w-[17px]" : "w-[15px]")}>
    <span className={clsx("flex h-[13px] w-[14px] items-center justify-center", active && "bg-[#3f7db8]")}>
      <Icon name={name} className="size-[11px]" />
    </span>
    {menu && <Caret className="ml-[3px]" />}
  </button>
);

const StatusBar = () => (
  <footer className="bg-[#1d272e]">
    <div className="flex h-[12px] items-center">
      <button className="ml-[10px] h-[11px] w-8 rounded-b bg-[#3a4652] font-bold text-white">Model</button>
      <button className="w-[34px]">Work</button>
      <button aria-label="New layout" className="ml-[7px]">
        <Icon name="plus" className="size-[5px]" />
      </button>
    </div>
    <div className="flex h-[20px] items-center justify-end pr-1 text-[#e1e6ea]">
      <div className="flex h-[15px] items-center whitespace-nowrap bg-[#26313a]">
        <span className="w-[113px] pr-1 text-right">139492.0, 126922.0, 725.0</span>
        <button className="w-[33px]">MODEL</button>
      </div>
      <StatusButton name="grid" active />
      <StatusButton name="dots" active menu />
      <StatusButton name="infer" active wide />
      <StatusButton name="ortho" />
      <StatusButton name="polar" menu />
      <StatusButton name="track" active />
      <StatusButton name="osnap" active menu />
      <StatusButton name="weights" wide />
      <StatusButton name="cycle" />
      <StatusButton name="annoVis" />
      <StatusButton name="annoSpark" active />
      <StatusButton name="anno" wide />
      <button className="flex w-[30px] shrink-0 items-center gap-[3px]">
        1:100
        <Caret />
      </button>
      <StatusButton name="gear" menu />
      <StatusButton name="plus" />
      <button className="flex w-[52px] shrink-0 items-center gap-[3px] whitespace-nowrap">
        MEP Design
        <Caret />
      </button>
      <StatusButton name="sphere" wide />
      <span className="w-[23px] shrink-0">1400</span>
      <StatusButton name="elevCube" wide />
      <span className="w-[22px] shrink-0">+725</span>
      <StatusButton name="link" wide />
      <StatusButton name="pages" wide />
      <StatusButton name="isoBox" active wide />
      <StatusButton name="gfx" active wide />
      <StatusButton name="warn" wide />
      <StatusButton name="clean" wide />
      <StatusButton name="burger" />
    </div>
  </footer>
);

const marks = Array.from({ length: 45 }, (_, i) => ({
  x: (i % 9) * 96 + 6,
  y: Math.floor(i / 9) * 91 + 6,
}));

const Watermark = () => (
  <svg className="pointer-events-none absolute inset-0 z-20 h-full w-full opacity-[0.08]" aria-hidden="true">
    {marks.map(({ x, y }) => (
      <g key={`${x},${y}`} transform={`translate(${x} ${y}) rotate(43)`}>
        <rect x="0" y="-8" width="116" height="16" rx="4" fill="none" stroke="#8e979e" />
        <text x="4" y="5" className="fill-[#8e979e] text-[16px]">
          Hoadzone.com
        </text>
      </g>
    ))}
  </svg>
);

export default function App() {
  return (
    <div className="relative flex h-screen flex-col overflow-hidden border-l-2 border-r-[3px] border-t-2 border-l-[#173a5c] border-r-[#5d93bb] border-t-[#155384] bg-[#1d272e] font-['Open_Sans','Noto_Sans',sans-serif] text-[7px] leading-[10px] text-[#d3dae0]">
      <TitleBar />
      <RibbonTabs />
      <Ribbon />
      <FileTabs />
      <main className="relative min-h-0 flex-1 bg-[#1e272d]">
        <Drawing />
        <Properties />
      </main>
      <CommandLine />
      <StatusBar />
      <Watermark />
    </div>
  );
}
